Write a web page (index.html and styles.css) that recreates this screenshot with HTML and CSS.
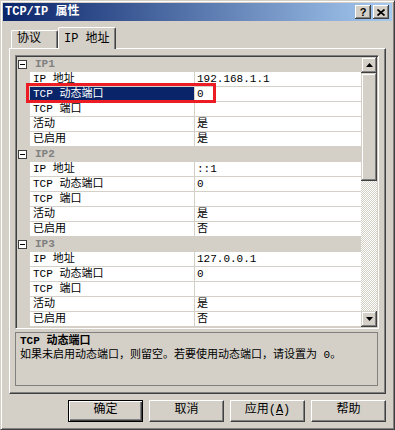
FILE: index.html
```html
<!DOCTYPE html>
<html>
<head>
<meta charset="UTF-8">
<title>TCP/IP 属性</title>

<link rel="stylesheet" href="styles.css">

</head>
<body>

	<div class="window">

		<div class="titlebar">
			<span class="title">TCP/IP 属性</span>
			<span class="capbtn help">?</span>
			<span class="capbtn close">
				<svg width="8" height="7" viewBox="0 0 8 7"><path d="M0.5 0.5L7.5 6.5M7.5 0.5L0.5 6.5" stroke="#000" stroke-width="1.7"/></svg>
			</span>
		</div>

		<div class="tabs">
			<div class="tab">协议</div>
			<div class="tab active">IP 地址</div>
		</div>

		<div class="panel">
			<div class="grid">
				<div class="rows">
					<!-- IP1 -->
					<div class="cat"><span class="box"></span><span class="catname">IP1</span></div>
					<div class="row"><span class="gut"></span><span class="name">IP 地址</span><span class="val">192.168.1.1</span></div>
					<div class="row"><span class="gut"></span><span class="name sel">TCP 动态端口</span><span class="val">0</span></div>
					<div class="row"><span class="gut"></span><span class="name">TCP 端口</span><span class="val"></span></div>
					<div class="row"><span class="gut"></span><span class="name">活动</span><span class="val">是</span></div>
					<div class="row"><span class="gut"></span><span class="name">已启用</span><span class="val">是</span></div>
					<!-- IP2 -->
					<div class="cat"><span class="box"></span><span class="catname">IP2</span></div>
					<div class="row"><span class="gut"></span><span class="name">IP 地址</span><span class="val">::1</span></div>
					<div class="row"><span class="gut"></span><span class="name">TCP 动态端口</span><span class="val">0</span></div>
					<div class="row"><span class="gut"></span><span class="name">TCP 端口</span><span class="val"></span></div>
					<div class="row"><span class="gut"></span><span class="name">活动</span><span class="val">是</span></div>
					<div class="row"><span class="gut"></span><span class="name">已启用</span><span class="val">否</span></div>
					<!-- IP3 -->
					<div class="cat"><span class="box"></span><span class="catname">IP3</span></div>
					<div class="row"><span class="gut"></span><span class="name">IP 地址</span><span class="val">127.0.0.1</span></div>
					<div class="row"><span class="gut"></span><span class="name">TCP 动态端口</span><span class="val">0</span></div>
					<div class="row"><span class="gut"></span><span class="name">TCP 端口</span><span class="val"></span></div>
					<div class="row"><span class="gut"></span><span class="name">活动</span><span class="val">是</span></div>
					<div class="row"><span class="gut"></span><span class="name">已启用</span><span class="val">否</span></div>
				</div>

				<div class="scroll">
					<div class="sbtn"><svg width="7" height="4" viewBox="0 0 7 4"><path d="M3.5 0L7 4H0Z" fill="#000"/></svg></div>
					<div class="thumb"></div>
					<div class="track"></div>
					<div class="sbtn"><svg width="7" height="4" viewBox="0 0 7 4"><path d="M0 0H7L3.5 4Z" fill="#000"/></svg></div>
				</div>

				<div class="mark"></div>
			</div>

			<div class="desc">
				<div class="desc-title">TCP 动态端口</div>
				<div class="desc-text">如果未启用动态端口，则留空。若要使用动态端口，请设置为 0。</div>
			</div>
		</div>

		<div class="buttons">
			<div class="btn default">确定</div>
			<div class="btn">取消</div>
			<div class="btn">应用(<u>A</u>)</div>
			<div class="btn">帮助</div>
		</div>

	</div>

</body>
</html>
```

FILE: styles.css
```css
body {
	margin: 0;
	background: #d4d0c8;
	font-family: "Liberation Mono", "Noto Sans CJK SC", monospace;
	font-size: 12px;
	color: #000;
}

.window {
	width: 395px;
	height: 430px;
	box-sizing: border-box;
	border: 1px solid;
	border-color: #d4d0c8 #404040 #404040 #d4d0c8;
	box-shadow: inset 1px 1px #fff, inset -1px -1px #808080;
	padding: 2px;
	background: #d4d0c8;
}

/* title bar */
.titlebar {
	height: 18px;
	display: flex;
	align-items: center;
	padding: 0 3px 0 2px;
	background: linear-gradient(to right, #0a246a, #a6caf0);
}

.title {
	flex: 1;
	color: #fff;
	font-weight: bold;
	font-size: 12px;
	line-height: 18px;
}

.capbtn {
	width: 16px;
	height: 14px;
	box-sizing: border-box;
	display: flex;
	align-items: center;
	justify-content: center;
	background: #d4d0c8;
	box-shadow: inset -1px -1px #404040, inset 1px 1px #fff, inset -2px -2px #808080;
}

.help {
	font-family: "Liberation Sans", sans-serif;
	font-weight: bold;
	font-size: 11px;
	line-height: 14px;
}

.close {
	margin-left: 2px;
}

/* tabs */
.tabs {
	display: flex;
	align-items: flex-end;
	height: 21px;
	margin: 6px 0 0 8px;
	position: relative;
	z-index: 1;
}

.tab {
	width: 47px;
	height: 18px;
	box-sizing: border-box;
	border-top: 1px solid #fff;
	border-left: 1px solid #fff;
	border-right: 1px solid #404040;
	border-radius: 2px 2px 0 0;
	box-shadow: inset -1px 0 #808080;
	padding: 1px 0 0 5px;
	line-height: 15px;
	background: #d4d0c8;
}

.tab.active {
	width: 58px;
	height: 22px;
	margin-bottom: -1px;
	padding-top: 4px;
}

/* tab page */
.panel {
	height: 346px;
	box-sizing: border-box;
	margin: 0 6px;
	border: 1px solid;
	border-color: #fff #404040 #404040 #fff;
	box-shadow: inset -1px -1px #808080;
	padding: 6px 0 0 5px;
}

.grid {
	position: relative;
	width: 364px;
	height: 274px;
	box-sizing: border-box;
	border: 1px solid;
	border-color: #808080 #fff #fff #808080;
	box-shadow: inset 1px 1px #404040, inset -1px -1px #d4d0c8;
	padding: 1px;
	display: flex;
	overflow: hidden;
}

.rows {
	flex: 1;
	font-size: 11px;
}

.cat {
	height: 15px;
	display: flex;
	align-items: center;
	background: #d4d0c8;
}

.box {
	width: 9px;
	height: 9px;
	box-sizing: border-box;
	margin-left: 1px;
	border: 1px solid #404040;
	background: #fff;
	position: relative;
}

.box::after {
	content: "";
	position: absolute;
	left: 1px;
	top: 3px;
	width: 5px;
	height: 1px;
	background: #000;
}

.catname {
	margin-left: 8px;
	font-weight: bold;
	color: #808080;
	line-height: 15px;
}

.row {
	height: 15px;
	display: grid;
	grid-template-columns: 13px 165px 1fr;
	line-height: 14px;
}

.gut {
	background: #d4d0c8;
}

.name,
.val {
	background: #fff;
	border-bottom: 1px solid #d4d0c8;
	white-space: nowrap;
}

.name {
	padding-left: 3px;
	border-right: 1px solid #d4d0c8;
}

.val {
	padding-left: 2px;
}

.name.sel {
	background: #0a246a;
	color: #fff;
}

/* scroll bar */
.scroll {
	width: 16px;
	display: flex;
	flex-direction: column;
}

.sbtn,
.thumb {
	background: #d4d0c8;
	box-shadow: inset -1px -1px #404040, inset 1px 1px #d4d0c8, inset -2px -2px #808080, inset 2px 2px #fff;
}

.sbtn {
	height: 16px;
	display: flex;
	align-items: center;
	justify-content: center;
}

.thumb {
	height: 108px;
}

.track {
	flex: 1;
	background: repeating-conic-gradient(#d4d0c8 0 25%, #fff 0 50%) 0 0 / 2px 2px;
}

/* red frame drawn over the selected row */
.mark {
	position: absolute;
	left: 10px;
	top: 27px;
	width: 190px;
	height: 20px;
	box-sizing: border-box;
	border: 3px solid #ec1c24;
}

.desc {
	width: 363px;
	height: 54px;
	box-sizing: border-box;
	margin-top: 3px;
	border: 1px solid #808080;
	padding: 1px 4px;
	font-size: 11px;
	line-height: 14px;
}

.desc-title {
	font-weight: bold;
}

/* bottom buttons */
.buttons {
	display: flex;
	justify-content: flex-end;
	gap: 6px;
	margin: 6px 6px 0 0;
}

.btn {
	width: 75px;
	height: 22px;
	box-sizing: border-box;
	border: 1px solid;
	border-color: #fff #404040 #404040 #fff;
	box-shadow: inset -1px -1px #808080;
	text-align: center;
	line-height: 19px;
}

.btn.default {
	border-color: #000;
	box-shadow: inset 1px 1px #fff, inset -1px -1px #404040, inset -2px -2px #808080;
}
```
